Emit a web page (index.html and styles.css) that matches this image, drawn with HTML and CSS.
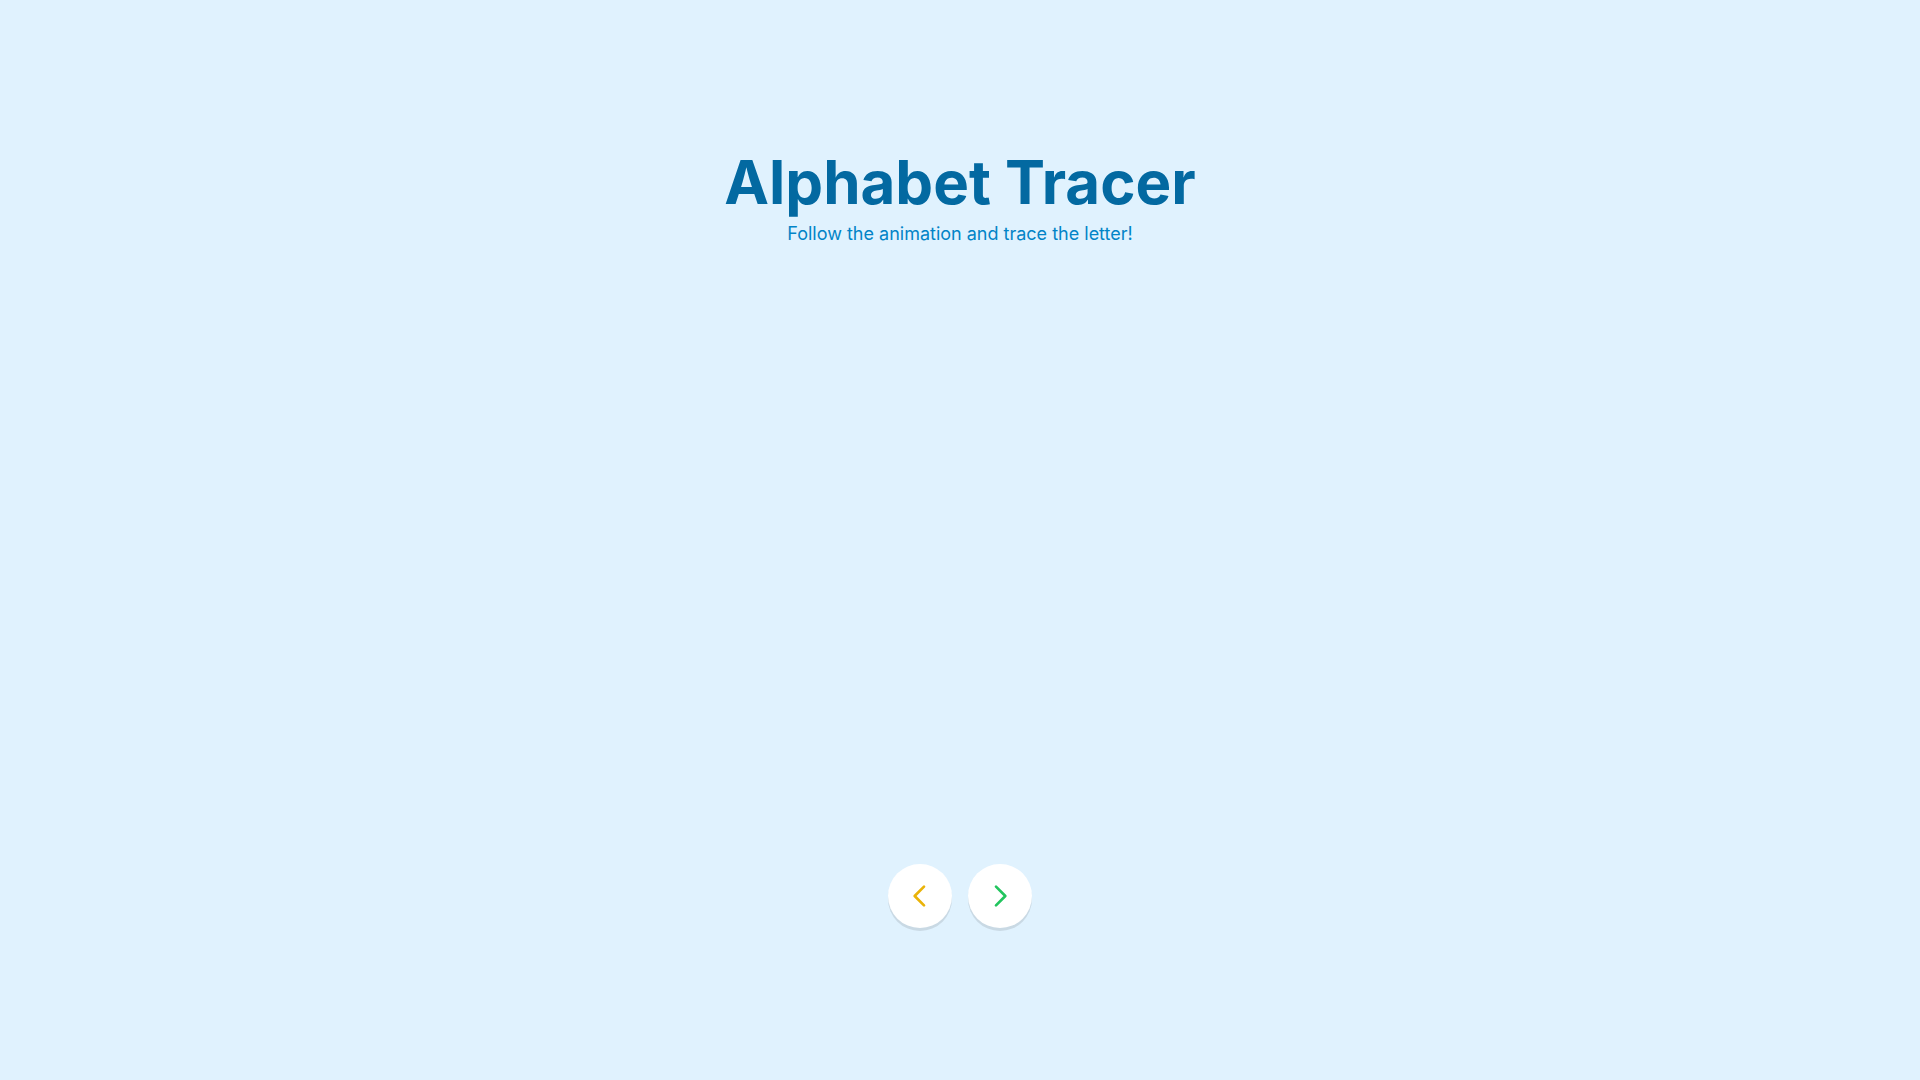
FILE: index.html
```html
<!DOCTYPE html>
<html lang="en">
<head>
<meta charset="utf-8">
<meta name="viewport" content="width=device-width, initial-scale=1">
<title>Alphabet Tracer</title>
<link rel="stylesheet" href="styles.css">
</head>
<body>
<main class="app">
  <header class="header">
    <h1 class="title">Alphabet Tracer</h1>
    <p class="subtitle">Follow the animation and trace the letter!</p>
  </header>
  <section class="stage" aria-label="Tracing area"></section>
  <nav class="controls" aria-label="Letters">
    <button class="control control-prev" type="button" aria-label="Previous letter">
      <svg class="icon" viewBox="0 0 24 24" aria-hidden="true"><path d="M15 19l-7-7 7-7"/></svg>
    </button>
    <button class="control control-next" type="button" aria-label="Next letter">
      <svg class="icon" viewBox="0 0 24 24" aria-hidden="true"><path d="M9 5l7 7-7 7"/></svg>
    </button>
  </nav>
</main>
</body>
</html>
```
FILE: styles.css
```css
* {
  box-sizing: border-box;
}

body {
  margin: 0;
  min-height: 100vh;
  display: flex;
  align-items: center;
  justify-content: center;
  background: #e0f2fe;
  font-family: Inter, sans-serif;
}

.app {
  width: 100%;
  max-width: 672px;
  padding: 16px;
  text-align: center;
}

.header {
  margin-bottom: 24px;
}

.title {
  margin: 0;
  color: #0369a1;
  font-size: 60px;
  line-height: 60px;
  font-weight: 700;
}

.subtitle {
  margin: 8px 0 0;
  color: #0284c7;
  font-size: 18px;
  line-height: 28px;
}

.stage {
  height: 568px;
}

.controls {
  display: flex;
  justify-content: center;
  gap: 16px;
  margin-top: 24px;
}

.control {
  display: flex;
  align-items: center;
  justify-content: center;
  width: 64px;
  height: 64px;
  padding: 0;
  border: 0;
  border-radius: 50%;
  background: #fff;
  box-shadow: 0 3px 0 rgba(0, 0, 0, 0.1);
  cursor: pointer;
}

.control-prev {
  color: #eab308;
}

.control-next {
  color: #22c55e;
}

.icon {
  width: 32px;
  height: 32px;
  fill: none;
  stroke: currentColor;
  stroke-width: 2;
  stroke-linecap: round;
  stroke-linejoin: round;
}
```
